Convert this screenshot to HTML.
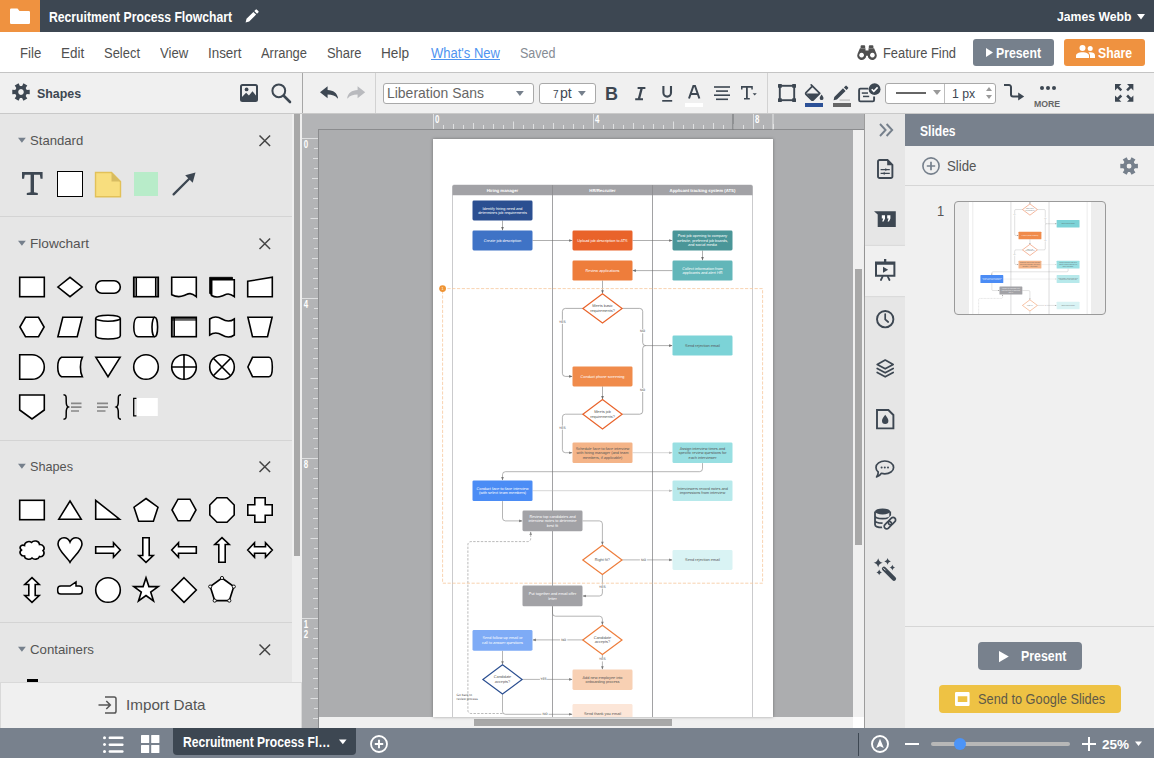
<!DOCTYPE html>
<html><head><meta charset="utf-8"><title>Recruitment Process Flowchart</title>
<style>
*{box-sizing:border-box;margin:0;padding:0}
html,body{width:1154px;height:758px;overflow:hidden;background:#fff}
body{position:relative;font-family:"Liberation Sans",sans-serif;}
.a{position:absolute}
.t{position:absolute;white-space:nowrap;font-family:"Liberation Sans",sans-serif}
svg{position:absolute;overflow:visible}

</style></head>
<body>
<div class="a" style="left:0px;top:0px;width:1154px;height:32px;background:#3d4752;"></div>
<div class="a" style="left:0px;top:0px;width:40px;height:32px;background:#ef9240;"></div>
<div class="a" style="left:0px;top:32px;width:1154px;height:40px;background:#fff;"></div>
<div class="a" style="left:0px;top:72px;width:1154px;height:1px;background:#c4c4c4;"></div>
<div class="a" style="left:0px;top:73px;width:1154px;height:40px;background:#f0f0f0;"></div>
<div class="a" style="left:0px;top:113px;width:1154px;height:1px;background:#c9c9c9;"></div>
<div class="a" style="left:0px;top:114px;width:294px;height:570px;background:#e6e6e6;"></div>
<div class="a" style="left:294px;top:114px;width:6px;height:570px;background:#e6e6e6;"></div>
<div class="a" style="left:300px;top:114px;width:2px;height:613px;background:#efefef;"></div>
<div class="a" style="left:302px;top:114px;width:563px;height:614px;background:#acadaf;"></div>
<div class="a" style="left:865px;top:114px;width:40px;height:614px;background:#e6e6e6;"></div>
<div class="a" style="left:905px;top:114px;width:249px;height:614px;background:#f0f0f0;"></div>
<div class="a" style="left:0px;top:727.5px;width:1154px;height:30.5px;background:#78818d;"></div>
<svg style="left:10px;top:8px" width="20" height="16" viewBox="0 0 20 16"><path d="M1.2 0.5h6.3l2 2.6H18.8a1.2 1.2 0 0 1 1.2 1.2V14.8a1.2 1.2 0 0 1-1.2 1.2H1.2A1.2 1.2 0 0 1 0 14.8V1.7A1.2 1.2 0 0 1 1.2 0.5z" fill="#fff"/></svg>
<span class="t" style="left:49.4px;top:7px;line-height:20px;height:20px;font-size:14px;font-weight:700;color:#fff;transform-origin:0 50%;transform:scaleX(0.8712);">Recruitment Process Flowchart</span>
<svg style="left:245px;top:9px" width="14" height="14" viewBox="0 0 14 14"><path d="M0.6 13.4l0.9-3.6 6.9-6.9 2.7 2.7-6.9 6.9zM9.3 2l1.3-1.3a0.9 0.9 0 0 1 1.3 0l1.4 1.4a0.9 0.9 0 0 1 0 1.3L12 4.7z" fill="#fff"/></svg>
<span class="t" style="left:1057.4px;top:7px;line-height:19px;height:19px;font-size:13.6px;font-weight:700;color:#fff;transform-origin:0 50%;transform:scaleX(0.8991);">James Webb</span>
<svg style="left:1137px;top:14px" width="8" height="6" viewBox="0 0 8 6"><path d="M0 0h8L4 5.6z" fill="#fff"/></svg>
<span class="t" style="left:20.0px;top:43px;line-height:20px;height:20px;font-size:14px;font-weight:400;color:#505050;transform-origin:0 50%;transform:scaleX(0.9396);">File</span>
<span class="t" style="left:61.2px;top:43px;line-height:20px;height:20px;font-size:14px;font-weight:400;color:#505050;transform-origin:0 50%;transform:scaleX(0.9617);">Edit</span>
<span class="t" style="left:104.2px;top:43px;line-height:20px;height:20px;font-size:14px;font-weight:400;color:#505050;transform-origin:0 50%;transform:scaleX(0.9249);">Select</span>
<span class="t" style="left:159.7px;top:43px;line-height:20px;height:20px;font-size:14px;font-weight:400;color:#505050;transform-origin:0 50%;transform:scaleX(0.9371);">View</span>
<span class="t" style="left:207.7px;top:43px;line-height:20px;height:20px;font-size:14px;font-weight:400;color:#505050;transform-origin:0 50%;transform:scaleX(0.9567);">Insert</span>
<span class="t" style="left:261.3px;top:43px;line-height:20px;height:20px;font-size:14px;font-weight:400;color:#505050;transform-origin:0 50%;transform:scaleX(0.9235);">Arrange</span>
<span class="t" style="left:326.9px;top:43px;line-height:20px;height:20px;font-size:14px;font-weight:400;color:#505050;transform-origin:0 50%;transform:scaleX(0.9235);">Share</span>
<span class="t" style="left:380.7px;top:43px;line-height:20px;height:20px;font-size:14px;font-weight:400;color:#505050;transform-origin:0 50%;transform:scaleX(0.9723);">Help</span>
<span class="t" style="left:431.4px;top:43px;line-height:20px;height:20px;font-size:14px;font-weight:400;color:#4f94f0;transform-origin:0 50%;transform:scaleX(0.9293);text-decoration:underline;text-underline-offset:1px">What's New</span>
<span class="t" style="left:519.9px;top:43px;line-height:20px;height:20px;font-size:14px;font-weight:400;color:#868c94;transform-origin:0 50%;transform:scaleX(0.8941);">Saved</span>
<svg style="left:857px;top:45px" width="20" height="14" viewBox="0 0 20 14"><g fill="#505050"><path d="M3.6 1.2a1 1 0 0 1 1-1h2.6a1 1 0 0 1 1 1V3H3.6zM11.8 1.2a1 1 0 0 1 1-1h2.6a1 1 0 0 1 1 1V3h-4.6z"/><path d="M2.9 3.3h5.6v2.2h3V3.3h5.6l2.3 5.4a4.5 4.5 0 1 1-8.6 2h-1.6a4.5 4.5 0 1 1-8.6-2zM4.6 7.7a2.4 2.4 0 1 0 0.01 0zM15.4 7.7a2.4 2.4 0 1 0 0.01 0z" fill-rule="evenodd"/></g></svg>
<span class="t" style="left:883.1px;top:43px;line-height:20px;height:20px;font-size:14px;font-weight:400;color:#505050;transform-origin:0 50%;transform:scaleX(0.9197);">Feature Find</span>
<div class="a" style="left:973px;top:38.5px;width:81px;height:27.5px;background:#76808c;border-radius:3px"></div>
<svg style="left:986px;top:47.5px" width="7" height="9" viewBox="0 0 7 9"><path d="M0 0l7 4.5L0 9z" fill="#fff"/></svg>
<span class="t" style="left:996.1px;top:43px;line-height:20px;height:20px;font-size:14px;font-weight:700;color:#fff;transform-origin:0 50%;transform:scaleX(0.8762);">Present</span>
<div class="a" style="left:1064px;top:38.5px;width:80.5px;height:27.5px;background:#ef9240;border-radius:3px"></div>
<svg style="left:1076px;top:45px" width="19" height="13" viewBox="0 0 19 13"><g fill="#fff"><circle cx="6.5" cy="3" r="3"/><path d="M0 13v-2.2c0-2.2 2.6-3.6 6.5-3.6s6.5 1.4 6.5 3.6V13z"/><circle cx="14.2" cy="3.4" r="2.5"/><path d="M14 13v-2.4c0-1.4-0.6-2.4-1.6-3.2 0.6-0.1 1.2-0.2 1.8-0.2 2.9 0 4.8 1.2 4.8 3.2V13z"/></g></svg>
<span class="t" style="left:1097.8px;top:43px;line-height:20px;height:20px;font-size:14px;font-weight:700;color:#fff;transform-origin:0 50%;transform:scaleX(0.8735);">Share</span>
<svg style="left:12px;top:83.2px" width="18" height="18" viewBox="0 0 18 18"><path fill-rule="evenodd" fill="#3d4752" d="M14.47,6.94 L17.72,6.77 L17.72,11.23 L14.47,11.06 L13.52,12.71 L15.29,15.44 L11.43,17.67 L9.95,14.77 L8.05,14.77 L6.57,17.67 L2.71,15.44 L4.48,12.71 L3.53,11.06 L0.28,11.23 L0.28,6.77 L3.53,6.94 L4.48,5.29 L2.71,2.56 L6.57,0.33 L8.05,3.23 L9.95,3.23 L11.43,0.33 L15.29,2.56 L13.52,5.29z M6.1,9.0 a2.9,2.9 0 1,0 5.8,0 a2.9,2.9 0 1,0 -5.8,0z"/><circle cx="9.0" cy="9.0" r="4.43" fill="none" stroke="#3d4752" stroke-width="3.07"/></svg>
<span class="t" style="left:37.1px;top:84px;line-height:19px;height:19px;font-size:12.8px;font-weight:700;color:#3d4752;transform-origin:0 50%;transform:scaleX(0.9708);">Shapes</span>
<svg style="left:240px;top:84px" width="18" height="18" viewBox="0 0 18 18"><rect x="1" y="1" width="16" height="16" rx="1.5" fill="none" stroke="#3d4752" stroke-width="2"/><circle cx="6.6" cy="5.4" r="1.9" fill="#3d4752"/><path d="M1.5 13.5l4.6-4.8 2.8 2.9 3.6-4.4 4 5V16.5H1.5z" fill="#3d4752"/></svg>
<svg style="left:271px;top:83px" width="21" height="21" viewBox="0 0 21 21"><circle cx="7.8" cy="7.8" r="6.4" fill="none" stroke="#3d4752" stroke-width="2"/><path d="M13 13l6 6" stroke="#3d4752" stroke-width="2.6" stroke-linecap="round"/></svg>
<div class="a" style="left:302px;top:73px;width:1px;height:40px;background:#a6a6a6;"></div>
<svg style="left:320px;top:86.2px" width="18.2" height="12.6" viewBox="0 0 18.2 12.6"><path d="M7.6 0.2L0 6.2l7.6 6V8.4c4.6 0 7.8 1.1 9.8 3.9 0.3 0.4 0.7 0.2 0.6-0.3C17.2 7 13.4 4.2 7.6 4z" fill="#3d4752"/></svg>
<svg style="left:347px;top:86.2px" width="18.2" height="12.6" viewBox="0 0 18.2 12.6"><path d="M7.6 0.2L0 6.2l7.6 6V8.4c4.6 0 7.8 1.1 9.8 3.9 0.3 0.4 0.7 0.2 0.6-0.3C17.2 7 13.4 4.2 7.6 4z" fill="#b9babe" transform="translate(18.2,0) scale(-1,1)"/></svg>
<div class="a" style="left:375px;top:73px;width:1px;height:40px;background:#d2d2d2;"></div>
<div class="a" style="left:383px;top:82.5px;width:151px;height:21.5px;background:#fff;border:1px solid #a9a9a9;border-radius:3px"></div>
<span class="t" style="left:387.0px;top:83px;line-height:20px;height:20px;font-size:14.4px;font-weight:400;color:#666;transform-origin:0 50%;transform:scaleX(0.9698);">Liberation Sans</span>
<svg style="left:516.1px;top:90.5px" width="7.8" height="5" viewBox="0 0 8 5"><path d="M0 0h8L4 5z" fill="#76808c"/></svg>
<div class="a" style="left:539.4px;top:82.5px;width:56.4px;height:21.5px;background:#fff;border:1px solid #a9a9a9;border-radius:3px"></div>
<span class="t" style="left:552.8px;top:87px;line-height:15px;height:15px;font-size:10.4px;font-weight:400;color:#3d4752;transform-origin:0 50%;transform:scaleX(0.9686);">7</span>
<span class="t" style="left:560.0px;top:83px;line-height:20px;height:20px;font-size:14.4px;font-weight:400;color:#3d4752;transform-origin:0 50%;transform:scaleX(0.9821);">pt</span>
<svg style="left:578.3px;top:90.5px" width="7.8" height="5" viewBox="0 0 8 5"><path d="M0 0h8L4 5z" fill="#76808c"/></svg>
<span class="t" style="left:604.8px;top:81px;line-height:25px;height:25px;font-size:18.6px;font-weight:700;color:#3d4752;transform-origin:0 50%;transform:scaleX(0.9674);">B</span>
<svg style="left:634.6px;top:86.5px" width="10.6" height="13.2" viewBox="0 0 10.6 13.2"><path d="M2.6 0H10.4V2H7.7L5.3 11.2H8V13.2H0.200V11.2H2.900L5.300 2H2.600z" fill="#3d4752"/></svg>
<svg style="left:662px;top:86.3px" width="10.4" height="16" viewBox="0 0 10.4 16"><path d="M1.400 0v6.800a3.800 3.800 0 0 0 7.600 0V0" fill="none" stroke="#3d4752" stroke-width="2.100"/><rect x="0.200" y="14" width="10" height="1.700" fill="#3d4752"/></svg>
<svg style="left:688px;top:85.2px" width="12.4" height="13.6" viewBox="0 0 12.4 13.6"><path d="M1 13.500L5.400 0.900h1.600l4.400 12.600M2.800 9h6.800" fill="none" stroke="#3d4752" stroke-width="2"/></svg>
<div class="a" style="left:685px;top:103.3px;width:18px;height:3.6px;background:#fff;"></div>
<svg style="left:714px;top:85.6px" width="16" height="15" viewBox="0 0 16 15"><g fill="#3d4752"><rect x="0" y="0.2" width="16" height="1.6"/><rect x="2" y="4.3" width="12" height="1.6"/><rect x="0" y="8.4" width="16" height="1.6"/><rect x="2" y="12.5" width="12" height="1.6"/></g></svg>
<svg style="left:741px;top:86.3px" width="16" height="13.6" viewBox="0 0 16 13.6"><path d="M0 0h11.8v3.4h-1.5V1.7H6.8v10.2h2v1.7H3v-1.7h2V1.7H1.5v1.7H0z" fill="#3d4752"/><path d="M11.6 7.2h4.2L13.7 9.6z" fill="#3d4752"/></svg>
<div class="a" style="left:767px;top:73px;width:1px;height:40px;background:#d2d2d2;"></div>
<svg style="left:778px;top:84px" width="18" height="18" viewBox="0 0 18 18"><rect x="1.8" y="1.8" width="14.4" height="14.4" fill="none" stroke="#3d4752" stroke-width="1.9"/><g fill="#3d4752"><rect x="0" y="0" width="3.8" height="3.8" rx="0.5"/><rect x="14.2" y="0" width="3.8" height="3.8" rx="0.5"/><rect x="0" y="14.2" width="3.8" height="3.8" rx="0.5"/><rect x="14.2" y="14.2" width="3.8" height="3.8" rx="0.5"/></g></svg>
<svg style="left:805px;top:83.6px" width="19" height="18" viewBox="0 0 19 18"><path d="M6.2 0.8l8.6 8.6-6.5 6.5a1.2 1.2 0 0 1-1.7 0L1 10.3a1.2 1.2 0 0 1 0-1.7L6.9 2.7" fill="none" stroke="#3d4752" stroke-width="1.7" stroke-linejoin="round" stroke-linecap="round"/><path d="M1.4 9.4h13L8.2 15.8a1 1 0 0 1-1.4 0z" fill="#3d4752"/><path d="M16.6 10.6c1 1.5 1.9 2.6 1.9 3.6a1.9 1.9 0 0 1-3.8 0c0-1 0.9-2.100 1.900-3.600z" fill="#3d4752"/></svg>
<div class="a" style="left:805px;top:103.3px;width:18px;height:3.6px;background:#2c5197;"></div>
<svg style="left:833px;top:84.6px" width="18" height="16" viewBox="0 0 18 16"><path d="M0.600 15.200l0.700-3.200 8.700-8.700 2.600 2.600-8.700 8.700zM10.900 2.400l1.500-1.500a0.900 0.900 0 0 1 1.300 0l1.300 1.300a0.900 0.900 0 0 1 0 1.300L13.500 5z" fill="#3d4752"/><rect x="6.500" y="14.600" width="10.500" height="0.900" fill="#aaa"/></svg>
<div class="a" style="left:833px;top:103.3px;width:18px;height:3.6px;background:#666;"></div>
<svg style="left:858px;top:83px" width="23" height="20" viewBox="0 0 23 20"><path d="M10.400 5.600H2.400a1.300 1.300 0 0 0-1.300 1.300v10.200a1.300 1.300 0 0 0 1.300 1.300h12.400a1.300 1.300 0 0 0 1.300-1.300v-3.600" fill="none" stroke="#3d4752" stroke-width="1.9"/><rect x="3.800" y="9.300" width="6.200" height="1.500" fill="#3d4752"/><rect x="5" y="12.700" width="6.200" height="1.500" fill="#3d4752"/><circle cx="16.600" cy="6.200" r="5.900" fill="#3d4752"/><path d="M13.700 6.200l2.100 2.100 3.800-3.900" fill="none" stroke="#fff" stroke-width="1.600"/></svg>
<div class="a" style="left:885.2px;top:82.5px;width:111.2px;height:21.5px;background:#fff;border:1px solid #a9a9a9;border-radius:3px"></div>
<div class="a" style="left:944.4px;top:83.5px;width:1px;height:19.5px;background:#bdbdbd;"></div>
<div class="a" style="left:896px;top:92.4px;width:30.4px;height:1.4px;background:#666;"></div>
<svg style="left:932.7px;top:90.2px" width="8" height="5.2" viewBox="0 0 8 5"><path d="M0 0h8L4 5z" fill="#9a9a9a"/></svg>
<span class="t" style="left:951.8px;top:84px;line-height:19px;height:19px;font-size:12.8px;font-weight:400;color:#3d4752;transform-origin:0 50%;transform:scaleX(0.9586);">1 px</span>
<svg style="left:985.6px;top:87px" width="6" height="12" viewBox="0 0 6 12"><path d="M0 4h6L3 0zM0 8h6L3 12z" fill="#9a9a9a"/></svg>
<svg style="left:1004px;top:84.200px" width="21" height="17" viewBox="0 0 21 17"><path d="M0 1.100h5a2 2 0 0 1 2 2v7.400a2 2 0 0 0 2 2h6" fill="none" stroke="#3d4752" stroke-width="2"/><path d="M14.200 8.600l6 3.900-6 3.900z" fill="#3d4752"/></svg>
<svg style="left:1040px;top:85.9px" width="17" height="5" viewBox="0 0 17 5"><g fill="#3d4752"><circle cx="2" cy="2" r="2"/><circle cx="8" cy="2" r="2"/><circle cx="14" cy="2" r="2"/></g></svg>
<span class="t" style="left:1034.2px;top:96px;line-height:15px;height:15px;font-size:9.6px;font-weight:700;color:#666;transform-origin:0 50%;transform:scaleX(0.9103);">MORE</span>
<svg style="left:1114.6px;top:84.1px" width="18.4" height="17.8" viewBox="0 0 18.4 17.8"><path d="M0 0h6.4L0 6.4z" fill="#3d4752"/><path d="M1.6 1.6L6.3 6.3" stroke="#3d4752" stroke-width="2.500"/><path d="M18.4 0h-6.4L18.4 6.4z" fill="#3d4752"/><path d="M16.799999999999997 1.6L12.099999999999998 6.3" stroke="#3d4752" stroke-width="2.500"/><path d="M0 17.8h6.4L0 11.4z" fill="#3d4752"/><path d="M1.6 16.2L6.3 11.5" stroke="#3d4752" stroke-width="2.500"/><path d="M18.4 17.8h-6.4L18.4 11.4z" fill="#3d4752"/><path d="M16.799999999999997 16.2L12.099999999999998 11.5" stroke="#3d4752" stroke-width="2.500"/></svg>
<svg style="left:18.4px;top:137.0px" width="7.8" height="6.6" viewBox="0 0 8 5"><path d="M0 0h8L4 5z" fill="#76808c"/></svg>
<span class="t" style="left:30.0px;top:131px;line-height:19px;height:19px;font-size:13.2px;font-weight:400;color:#545454;transform-origin:0 50%;transform:scaleX(0.9938);">Standard</span>
<svg style="left:259.4px;top:134.5px" width="11.6" height="11.6" viewBox="0 0 11.6 11.6"><path d="M0.5 0.5l10.6 10.6M11.1 0.5L0.5 11.1" stroke="#444" stroke-width="1.5" fill="none"/></svg>
<svg style="left:18.4px;top:240.0px" width="7.8" height="6.6" viewBox="0 0 8 5"><path d="M0 0h8L4 5z" fill="#76808c"/></svg>
<span class="t" style="left:30.0px;top:234px;line-height:19px;height:19px;font-size:13.2px;font-weight:400;color:#545454;transform-origin:0 50%;transform:scaleX(1.0320);">Flowchart</span>
<svg style="left:259.4px;top:237.5px" width="11.6" height="11.6" viewBox="0 0 11.6 11.6"><path d="M0.5 0.5l10.6 10.6M11.1 0.5L0.5 11.1" stroke="#444" stroke-width="1.5" fill="none"/></svg>
<svg style="left:18.4px;top:463.0px" width="7.8" height="6.6" viewBox="0 0 8 5"><path d="M0 0h8L4 5z" fill="#76808c"/></svg>
<span class="t" style="left:30.0px;top:457px;line-height:19px;height:19px;font-size:13.2px;font-weight:400;color:#545454;transform-origin:0 50%;transform:scaleX(0.9612);">Shapes</span>
<svg style="left:259.4px;top:460.5px" width="11.6" height="11.6" viewBox="0 0 11.6 11.6"><path d="M0.5 0.5l10.6 10.6M11.1 0.5L0.5 11.1" stroke="#444" stroke-width="1.5" fill="none"/></svg>
<svg style="left:18.4px;top:646.0px" width="7.8" height="6.6" viewBox="0 0 8 5"><path d="M0 0h8L4 5z" fill="#76808c"/></svg>
<span class="t" style="left:30.0px;top:640px;line-height:19px;height:19px;font-size:13.2px;font-weight:400;color:#545454;transform-origin:0 50%;transform:scaleX(1.0034);">Containers</span>
<svg style="left:259.4px;top:643.5px" width="11.6" height="11.6" viewBox="0 0 11.6 11.6"><path d="M0.5 0.5l10.6 10.6M11.1 0.5L0.5 11.1" stroke="#444" stroke-width="1.5" fill="none"/></svg>
<div class="a" style="left:0px;top:216px;width:292px;height:1px;background:#d4d4d4;"></div>
<div class="a" style="left:0px;top:440px;width:292px;height:1px;background:#d4d4d4;"></div>
<div class="a" style="left:0px;top:622px;width:292px;height:1px;background:#d4d4d4;"></div>
<div class="a" style="left:292px;top:114px;width:10px;height:614px;background:#efefef;"></div>
<div class="a" style="left:294px;top:114px;width:6px;height:442px;background:#a8a8a8;"></div>
<svg style="left:22.1px;top:172.3px" width="20.6" height="23.1" viewBox="0 0 20.6 23.1"><path d="M0 0H20.600V6.800H18.500L17.900 2.700H12V20.300L15.800 20.900V23.100H4.800V20.900L8.600 20.300V2.700H2.700L2.100 6.800H0z" fill="#3d4752"/></svg>
<div class="a" style="left:57.3px;top:171.3px;width:26px;height:25.4px;background:#fff;border:1.8px solid #000"></div>
<svg style="left:95.3px;top:171.5px" width="26" height="25.2" viewBox="0 0 26 25.2"><path d="M0.5 0.5H16.5L25.5 9.5V24.7H0.5z" fill="#f8de7e" stroke="#e2c159" stroke-width="1.400"/><path d="M16.5 0.5L25.5 9.5H16.5z" fill="#d7bc62"/></svg>
<div class="a" style="left:134px;top:172.3px;width:24.2px;height:23.6px;background:#b8ecc9;"></div>
<svg style="left:172px;top:172px" width="24" height="24" viewBox="0 0 24 24"><path d="M1.6 22.400L17.500 6.500" stroke="#3d4752" stroke-width="2.300" stroke-linecap="round"/><path d="M23.500 0.500l-2.800 10.300-7.500-7.500z" fill="#3d4752"/></svg>
<svg style="left:19.3px;top:272.8px" width="26" height="28" viewBox="0 0 26 28" fill="#fff" stroke="#000" stroke-width="1.6" stroke-linejoin="miter"><rect x="0.7" y="4.3" width="24.6" height="19.4"/></svg>
<svg style="left:57.3px;top:272.8px" width="26" height="28" viewBox="0 0 26 28" fill="#fff" stroke="#000" stroke-width="1.6" stroke-linejoin="miter"><path d="M0.9 14L13 4.3 25.100 14 13 23.7z"/></svg>
<svg style="left:95.3px;top:272.8px" width="26" height="28" viewBox="0 0 26 28" fill="#fff" stroke="#000" stroke-width="1.6" stroke-linejoin="miter"><rect x="0.7" y="7.8" width="24.6" height="12.4" rx="6.200"/></svg>
<svg style="left:133.3px;top:272.8px" width="26" height="28" viewBox="0 0 26 28" fill="#fff" stroke="#000" stroke-width="1.6" stroke-linejoin="miter"><rect x="0.7" y="4.3" width="24.6" height="19.4"/><path d="M3.500 4.3V23.7M22.500 4.3V23.7" stroke-width="1.1"/><path d="M2 4.3V23.7M24 4.3V23.7" stroke-width="1.1"/></svg>
<svg style="left:171.3px;top:272.8px" width="26" height="28" viewBox="0 0 26 28" fill="#fff" stroke="#000" stroke-width="1.6" stroke-linejoin="miter"><path d="M0.7 4.3H25.300V23.7C19 18.500 17 21 13 22.600 9 24.200 5 24 0.7 21.800z"/></svg>
<svg style="left:209.3px;top:272.8px" width="26" height="28" viewBox="0 0 26 28" fill="#fff" stroke="#000" stroke-width="1.6" stroke-linejoin="miter"><path d="M2.500 6.800H25.300V23.7C19 19 17 21.500 13 23 9 24.500 5.500 24.200 2.500 22.500z"/><path d="M0.600 4.3H23.500V6.500H2.800V22L0.600 20.500z" fill="#000" stroke-width="0.800"/></svg>
<svg style="left:247.3px;top:272.8px" width="26" height="28" viewBox="0 0 26 28" fill="#fff" stroke="#000" stroke-width="1.6" stroke-linejoin="miter"><path d="M0.7 8.300L25.300 4.3V23.7H0.7z"/></svg>
<svg style="left:19.3px;top:312.9px" width="26" height="28" viewBox="0 0 26 28" fill="#fff" stroke="#000" stroke-width="1.6" stroke-linejoin="miter"><path d="M0.900 14L6.500 4.3H19.500L25.100 14 19.500 23.7H6.500z"/></svg>
<svg style="left:57.3px;top:312.9px" width="26" height="28" viewBox="0 0 26 28" fill="#fff" stroke="#000" stroke-width="1.6" stroke-linejoin="miter"><path d="M5.800 4.3H25.100L20.200 23.7H0.900z"/></svg>
<svg style="left:95.3px;top:312.9px" width="26" height="28" viewBox="0 0 26 28" fill="#fff" stroke="#000" stroke-width="1.6" stroke-linejoin="miter"><path d="M0.700 5.200V22.800C0.700 24.800 6 26 13 26S25.300 24.800 25.300 22.800V5.200"/><ellipse cx="13" cy="5.200" rx="12.300" ry="3"/></svg>
<svg style="left:133.3px;top:312.9px" width="26" height="28" viewBox="0 0 26 28" fill="#fff" stroke="#000" stroke-width="1.6" stroke-linejoin="miter"><path d="M5 4.3H21.800V23.7H5C-0.600 23.7 -0.600 4.3 5 4.3z" stroke="none"/><path d="M21.800 4.3H5C-0.600 4.3 -0.600 23.7 5 23.7H21.800" fill="none"/><ellipse cx="21.800" cy="14" rx="2.800" ry="9.700"/></svg>
<svg style="left:171.3px;top:312.9px" width="26" height="28" viewBox="0 0 26 28" fill="#fff" stroke="#000" stroke-width="1.6" stroke-linejoin="miter"><rect x="0.7" y="4.3" width="24.6" height="19.4"/><path d="M0.700 7H25.300M3.400 4.3V23.7" stroke-width="1.100"/><path d="M0.700 5.700H25.300M2 4.3V23.7" stroke-width="1.100"/></svg>
<svg style="left:209.3px;top:312.9px" width="26" height="28" viewBox="0 0 26 28" fill="#fff" stroke="#000" stroke-width="1.6" stroke-linejoin="miter"><path d="M0.700 6C5 3 9 3.500 13 6S21 9 25.300 6V22C21 25 17 24.500 13 22S5 19 0.700 22z"/></svg>
<svg style="left:247.3px;top:312.9px" width="26" height="28" viewBox="0 0 26 28" fill="#fff" stroke="#000" stroke-width="1.6" stroke-linejoin="miter"><path d="M0.900 4.3H25.100L20.500 23.7H5.500z"/></svg>
<svg style="left:19.3px;top:352.8px" width="26" height="28" viewBox="0 0 26 28" fill="#fff" stroke="#000" stroke-width="1.6" stroke-linejoin="miter"><path d="M0.700 1.700H13A12.300 12.300 0 0 1 13 26.300H0.700z"/></svg>
<svg style="left:57.3px;top:352.8px" width="26" height="28" viewBox="0 0 26 28" fill="#fff" stroke="#000" stroke-width="1.6" stroke-linejoin="miter"><path d="M4.500 4.3H25.300C22.800 9 22.800 19 25.300 23.7H4.500C-0.500 21.2 -0.500 6.8 4.500 4.3z"/></svg>
<svg style="left:95.3px;top:352.8px" width="26" height="28" viewBox="0 0 26 28" fill="#fff" stroke="#000" stroke-width="1.6" stroke-linejoin="miter"><path d="M0.900 4.3H25.100L13 23.7z"/></svg>
<svg style="left:133.3px;top:352.8px" width="26" height="28" viewBox="0 0 26 28" fill="#fff" stroke="#000" stroke-width="1.6" stroke-linejoin="miter"><circle cx="13" cy="14" r="12.300"/></svg>
<svg style="left:171.3px;top:352.8px" width="26" height="28" viewBox="0 0 26 28" fill="#fff" stroke="#000" stroke-width="1.6" stroke-linejoin="miter"><circle cx="13" cy="14" r="12.300"/><path d="M13 1.700V26.300M0.700 14H25.300"/></svg>
<svg style="left:209.3px;top:352.8px" width="26" height="28" viewBox="0 0 26 28" fill="#fff" stroke="#000" stroke-width="1.6" stroke-linejoin="miter"><circle cx="13" cy="14" r="12.300"/><path d="M4.300 5.300L21.700 22.700M21.700 5.300L4.300 22.700"/></svg>
<svg style="left:247.3px;top:352.8px" width="26" height="28" viewBox="0 0 26 28" fill="#fff" stroke="#000" stroke-width="1.6" stroke-linejoin="miter"><path d="M5.500 4.3H22C24.500 4.3 25.300 9 25.300 14S24.500 23.7 22 23.7H5.500L0.900 14z"/></svg>
<svg style="left:19.3px;top:392.9px" width="26" height="28" viewBox="0 0 26 28" fill="#fff" stroke="#000" stroke-width="1.6" stroke-linejoin="miter"><path d="M0.700 2H25.300V17L13 26 0.700 17z"/></svg>
<svg style="left:57.3px;top:392.9px" width="26" height="28" viewBox="0 0 26 28" fill="#fff" stroke="#000" stroke-width="1.6" stroke-linejoin="miter"><path d="M6.500 1.800C9.500 1.800 9.200 4 9.200 7.500S9 13 11.200 14C9 15 9.200 17 9.200 20.500S9.500 26.200 6.500 26.200" stroke-width="1.500" fill="none"/><path d="M14 10.400H24.500M14 14.200H24.500M14 18H22" stroke="#888" stroke-width="1.700"/></svg>
<svg style="left:95.3px;top:392.9px" width="26" height="28" viewBox="0 0 26 28" fill="#fff" stroke="#000" stroke-width="1.6" stroke-linejoin="miter"><path d="M26 1.800C23 1.800 23.300 4 23.300 7.500S23.500 13 21.300 14C23.500 15 23.300 17 23.300 20.500S23 26.200 26 26.200" stroke-width="1.500" fill="none"/><path d="M2 10.400H13M2 14.200H13M2 18H10.500" stroke="#888" stroke-width="1.700"/></svg>
<svg style="left:133.3px;top:392.9px" width="26" height="28" viewBox="0 0 26 28" fill="#fff" stroke="#000" stroke-width="1.6" stroke-linejoin="miter"><rect x="4" y="5" width="20.800" height="18" fill="#fff" stroke="none"/><path d="M3.400 5.400H0.700V22.900H3.400" stroke-width="1.300" fill="none"/></svg>
<svg style="left:19.3px;top:495.9px" width="26" height="28" viewBox="0 0 26 28" fill="#fff" stroke="#000" stroke-width="1.6" stroke-linejoin="miter"><rect x="0.7" y="4.3" width="24.6" height="19.4"/></svg>
<svg style="left:57.3px;top:495.9px" width="26" height="28" viewBox="0 0 26 28" fill="#fff" stroke="#000" stroke-width="1.6" stroke-linejoin="miter"><path d="M13 5L24.200 23.2H1.800z"/></svg>
<svg style="left:95.3px;top:495.9px" width="26" height="28" viewBox="0 0 26 28" fill="#fff" stroke="#000" stroke-width="1.6" stroke-linejoin="miter"><path d="M0.700 4.3V23.2H24.500z"/></svg>
<svg style="left:133.3px;top:495.9px" width="26" height="28" viewBox="0 0 26 28" fill="#fff" stroke="#000" stroke-width="1.6" stroke-linejoin="miter"><path d="M13 2.500L25 11.200 20.400 25.300H5.600L1 11.200z"/></svg>
<svg style="left:171.3px;top:495.9px" width="26" height="28" viewBox="0 0 26 28" fill="#fff" stroke="#000" stroke-width="1.6" stroke-linejoin="miter"><path d="M1 14L7 3.200H19L25 14 19 24.800H7z"/></svg>
<svg style="left:209.3px;top:495.9px" width="26" height="28" viewBox="0 0 26 28" fill="#fff" stroke="#000" stroke-width="1.6" stroke-linejoin="miter"><path d="M8 1.800H18L25.200 9V19L18 26.200H8L0.800 19V9z"/></svg>
<svg style="left:247.3px;top:495.9px" width="26" height="28" viewBox="0 0 26 28" fill="#fff" stroke="#000" stroke-width="1.6" stroke-linejoin="miter"><path d="M7.800 1.800H18.200V8.800H25.200V19.200H18.200V26.200H7.800V19.200H0.800V8.800H7.800z"/></svg>
<svg style="left:19.3px;top:535.9px" width="26" height="28" viewBox="0 0 26 28" fill="#fff" stroke="#000" stroke-width="1.6" stroke-linejoin="miter"><path d="M5.500 9.500C5.500 6 10 4.500 12.500 6.500 14.500 4 20 4.500 20.500 8.500 24.500 8 26.500 12.500 24 14.500 26.500 17.500 24 21.500 20.500 20.500 19.500 23.500 15 24 13 22 10.500 24.500 5.500 23 5.500 20 1.500 20.500 -0.500 16 2.500 14 -0.500 11.500 2 8 5.500 9.500z"/></svg>
<svg style="left:57.3px;top:535.9px" width="26" height="28" viewBox="0 0 26 28" fill="#fff" stroke="#000" stroke-width="1.6" stroke-linejoin="miter"><path d="M13 26.300C10 21 1 14.500 1 8 1 4 4 1.700 7 1.700 9.800 1.700 12 3.500 13 6 14 3.500 16.200 1.700 19 1.700 22 1.700 25 4 25 8 25 14.500 16 21 13 26.300z"/></svg>
<svg style="left:95.3px;top:535.9px" width="26" height="28" viewBox="0 0 26 28" fill="#fff" stroke="#000" stroke-width="1.6" stroke-linejoin="miter"><path d="M0.700 10.800H18.500V6.800L25.300 14 18.500 21.200V17.200H0.700z"/></svg>
<svg style="left:133.3px;top:535.9px" width="26" height="28" viewBox="0 0 26 28" fill="#fff" stroke="#000" stroke-width="1.6" stroke-linejoin="miter"><path d="M9.800 1.700H16.200V19.500H20.200L13 26.300 5.800 19.500H9.800z"/></svg>
<svg style="left:171.3px;top:535.9px" width="26" height="28" viewBox="0 0 26 28" fill="#fff" stroke="#000" stroke-width="1.6" stroke-linejoin="miter"><path d="M25.300 10.800H7.500V6.800L0.700 14 7.500 21.200V17.200H25.300z"/></svg>
<svg style="left:209.3px;top:535.9px" width="26" height="28" viewBox="0 0 26 28" fill="#fff" stroke="#000" stroke-width="1.6" stroke-linejoin="miter"><path d="M9.800 26.300H16.200V8.500H20.200L13 1.700 5.800 8.500H9.800z"/></svg>
<svg style="left:247.3px;top:535.9px" width="26" height="28" viewBox="0 0 26 28" fill="#fff" stroke="#000" stroke-width="1.6" stroke-linejoin="miter"><path d="M0.700 14L7.500 6.800V10.800H18.500V6.800L25.300 14 18.500 21.200V17.200H7.500V21.200z"/></svg>
<svg style="left:19.3px;top:576.0px" width="26" height="28" viewBox="0 0 26 28" fill="#fff" stroke="#000" stroke-width="1.6" stroke-linejoin="miter"><path d="M13 1.700L20.200 8.500H16.200V19.500H20.200L13 26.300 5.800 19.500H9.800V8.500H5.800z"/></svg>
<svg style="left:57.3px;top:576.0px" width="26" height="28" viewBox="0 0 26 28" fill="#fff" stroke="#000" stroke-width="1.6" stroke-linejoin="miter"><path d="M3.800 10H13L19 6V10H22.200A3.100 3.100 0 0 1 25.300 13.100V14.900A3.100 3.100 0 0 1 22.200 18H3.800A3.100 3.100 0 0 1 0.700 14.900V13.100A3.100 3.100 0 0 1 3.800 10z" stroke-width="1.500"/></svg>
<svg style="left:95.3px;top:576.0px" width="26" height="28" viewBox="0 0 26 28" fill="#fff" stroke="#000" stroke-width="1.6" stroke-linejoin="miter"><circle cx="13" cy="14" r="12.300"/></svg>
<svg style="left:133.3px;top:576.0px" width="26" height="28" viewBox="0 0 26 28" fill="#fff" stroke="#000" stroke-width="1.6" stroke-linejoin="miter"><path d="M13 1.800L15.900 10.600H25.200L17.700 16.100 20.500 25 13 19.500 5.500 25 8.300 16.100 0.800 10.600H10.100z"/></svg>
<svg style="left:171.3px;top:576.0px" width="26" height="28" viewBox="0 0 26 28" fill="#fff" stroke="#000" stroke-width="1.6" stroke-linejoin="miter"><path d="M13 1.700L25.300 14 13 26.300 0.700 14z"/></svg>
<svg style="left:209.3px;top:576.0px" width="26" height="28" viewBox="0 0 26 28" fill="#fff" stroke="#000" stroke-width="1.6" stroke-linejoin="miter"><path d="M13 2L24.800 10.600 20.300 24.600H5.700L1.200 10.600z"/><g fill="#fff" stroke-width="0.900"><circle cx="13" cy="2" r="1.600"/><circle cx="24.800" cy="10.600" r="1.600"/><circle cx="20.300" cy="24.600" r="1.600"/><circle cx="5.700" cy="24.600" r="1.600"/><circle cx="1.200" cy="10.600" r="1.600"/></g></svg>
<div class="a" style="left:26.9px;top:679px;width:10.8px;height:3px;background:#000;"></div>
<div class="a" style="left:0px;top:682px;width:302px;height:46px;background:#f0f0f0;border:1px solid #d9d9d9;border-bottom:none"></div>
<svg style="left:98px;top:696px" width="19" height="18" viewBox="0 0 19 18"><path d="M7 1h9.200a1.800 1.800 0 0 1 1.800 1.800v12.400a1.800 1.800 0 0 1-1.800 1.800H7" fill="none" stroke="#555" stroke-width="1.500"/><path d="M0.500 9H12M8.300 5l4 4-4 4" fill="none" stroke="#555" stroke-width="1.500"/></svg>
<span class="t" style="left:126.2px;top:695px;line-height:20px;height:20px;font-size:14.6px;font-weight:400;color:#555;transform-origin:0 50%;transform:scaleX(1.0439);">Import Data</span>
<div class="a" style="left:302px;top:114px;width:563px;height:16px;background:#b3b4b6;"></div>
<div class="a" style="left:302px;top:114px;width:16px;height:614px;background:#b3b4b6;"></div>
<div class="a" style="left:318px;top:129px;width:547px;height:1px;background:#8b8c8e;"></div>
<div class="a" style="left:318px;top:129px;width:1px;height:599px;background:#8b8c8e;"></div>
<svg style="left:0;top:0" width="1154" height="758" viewBox="0 0 1154 758" fill="#dedfe0"><rect x="433" y="114" width="1" height="15"/><rect x="443" y="125" width="1" height="4"/><rect x="453" y="124" width="1" height="5"/><rect x="463" y="125" width="1" height="4"/><rect x="473" y="123" width="1" height="6"/><rect x="483" y="125" width="1" height="4"/><rect x="493" y="124" width="1" height="5"/><rect x="503" y="125" width="1" height="4"/><rect x="513" y="121.5" width="1" height="7.5"/><rect x="523" y="125" width="1" height="4"/><rect x="533" y="124" width="1" height="5"/><rect x="543" y="125" width="1" height="4"/><rect x="553" y="123" width="1" height="6"/><rect x="563" y="125" width="1" height="4"/><rect x="573" y="124" width="1" height="5"/><rect x="583" y="125" width="1" height="4"/><rect x="593" y="114" width="1" height="15"/><rect x="603" y="125" width="1" height="4"/><rect x="613" y="124" width="1" height="5"/><rect x="623" y="125" width="1" height="4"/><rect x="633" y="123" width="1" height="6"/><rect x="643" y="125" width="1" height="4"/><rect x="653" y="124" width="1" height="5"/><rect x="663" y="125" width="1" height="4"/><rect x="673" y="121.5" width="1" height="7.5"/><rect x="683" y="125" width="1" height="4"/><rect x="693" y="124" width="1" height="5"/><rect x="703" y="125" width="1" height="4"/><rect x="713" y="123" width="1" height="6"/><rect x="723" y="125" width="1" height="4"/><rect x="733" y="124" width="1" height="5"/><rect x="743" y="125" width="1" height="4"/><rect x="753" y="114" width="1" height="15"/><rect x="763" y="125" width="1" height="4"/><rect x="773" y="124" width="1" height="5"/><rect x="302" y="138" width="16" height="1"/><rect x="314" y="148" width="4" height="1"/><rect x="313" y="158" width="5" height="1"/><rect x="314" y="168" width="4" height="1"/><rect x="312" y="178" width="6" height="1"/><rect x="314" y="188" width="4" height="1"/><rect x="313" y="198" width="5" height="1"/><rect x="314" y="208" width="4" height="1"/><rect x="310.5" y="218" width="7.5" height="1"/><rect x="314" y="228" width="4" height="1"/><rect x="313" y="238" width="5" height="1"/><rect x="314" y="248" width="4" height="1"/><rect x="312" y="258" width="6" height="1"/><rect x="314" y="268" width="4" height="1"/><rect x="313" y="278" width="5" height="1"/><rect x="314" y="288" width="4" height="1"/><rect x="302" y="298" width="16" height="1"/><rect x="314" y="308" width="4" height="1"/><rect x="313" y="318" width="5" height="1"/><rect x="314" y="328" width="4" height="1"/><rect x="312" y="338" width="6" height="1"/><rect x="314" y="348" width="4" height="1"/><rect x="313" y="358" width="5" height="1"/><rect x="314" y="368" width="4" height="1"/><rect x="310.5" y="378" width="7.5" height="1"/><rect x="314" y="388" width="4" height="1"/><rect x="313" y="398" width="5" height="1"/><rect x="314" y="408" width="4" height="1"/><rect x="312" y="418" width="6" height="1"/><rect x="314" y="428" width="4" height="1"/><rect x="313" y="438" width="5" height="1"/><rect x="314" y="448" width="4" height="1"/><rect x="302" y="458" width="16" height="1"/><rect x="314" y="468" width="4" height="1"/><rect x="313" y="478" width="5" height="1"/><rect x="314" y="488" width="4" height="1"/><rect x="312" y="498" width="6" height="1"/><rect x="314" y="508" width="4" height="1"/><rect x="313" y="518" width="5" height="1"/><rect x="314" y="528" width="4" height="1"/><rect x="310.5" y="538" width="7.5" height="1"/><rect x="314" y="548" width="4" height="1"/><rect x="313" y="558" width="5" height="1"/><rect x="314" y="568" width="4" height="1"/><rect x="312" y="578" width="6" height="1"/><rect x="314" y="588" width="4" height="1"/><rect x="313" y="598" width="5" height="1"/><rect x="314" y="608" width="4" height="1"/><rect x="302" y="618" width="16" height="1"/><rect x="314" y="628" width="4" height="1"/><rect x="313" y="638" width="5" height="1"/><rect x="314" y="648" width="4" height="1"/><rect x="312" y="658" width="6" height="1"/><rect x="314" y="668" width="4" height="1"/><rect x="313" y="678" width="5" height="1"/><rect x="314" y="688" width="4" height="1"/><rect x="310.5" y="698" width="7.5" height="1"/><rect x="314" y="708" width="4" height="1"/><rect x="313" y="718" width="5" height="1"/><rect x="732.500" y="114" width="1" height="15.500" fill="#6d6e70"/><rect x="772.500" y="114" width="1" height="15.500" fill="#e8e8e8"/><g font-family="Liberation Sans, sans-serif" font-size="10.400" font-weight="700" fill="#fff"><text transform="translate(435,123) scale(0.760,1)">0</text><text transform="translate(595,123) scale(0.760,1)">4</text><text transform="translate(755,123) scale(0.760,1)">8</text><text transform="translate(303.8,148.2) scale(0.760,1)">0</text><text transform="translate(303.8,308.2) scale(0.760,1)">4</text><text transform="translate(303.8,468.2) scale(0.760,1)">8</text><text transform="translate(303.8,628.3) scale(0.760,1)">1</text><text transform="translate(303.8,637.9) scale(0.760,1)">2</text></g></svg>
<div class="a" style="left:853px;top:130px;width:11.5px;height:587px;background:#f0f0f0;"></div>
<div class="a" style="left:855px;top:269px;width:7px;height:276px;background:#a8a8a8;"></div>
<div class="a" style="left:319px;top:717px;width:534px;height:11px;background:#f0f0f0;"></div>
<div class="a" style="left:474px;top:719px;width:198px;height:6.5px;background:#a8a8a8;"></div>
<div class="a" style="left:853px;top:717px;width:11px;height:11px;background:#fff;"></div>
<div class="a" style="left:433px;top:139px;width:340px;height:578px;background:#fff;overflow:hidden;box-shadow:0 0 3px rgba(0,0,0,0.35)">
<svg style="left:-433px;top:-139px" width="1154" height="758" viewBox="0 0 1154 758"><g id="dg" font-family="Liberation Sans, sans-serif" font-size="3.850" text-rendering="geometricPrecision"><path d="M452.500 717V186.600a1.500 1.500 0 0 1 1.500-1.500H751a1.500 1.500 0 0 1 1.500 1.500V717" fill="none" stroke="#b5b5b8" stroke-width="0.700"/><path d="M452.500 195.300V186.600a1.500 1.500 0 0 1 1.500-1.500H751a1.500 1.500 0 0 1 1.500 1.500V195.300z" fill="#a2a2a6"/><text x="502.5" y="191.700" fill="#fff" text-anchor="middle" font-size="4.300" font-weight="700">Hiring manager</text><text x="602.5" y="191.700" fill="#fff" text-anchor="middle" font-size="4.300" font-weight="700">HR/Recruiter</text><text x="702.5" y="191.700" fill="#fff" text-anchor="middle" font-size="4.300" font-weight="700">Applicant tracking system (ATS)</text><path d="M552.500 185.100V717M652.500 185.100V717" stroke="#8a8a8d" stroke-width="0.800" fill="none"/><path d="M502.500 220.500V230.300" fill="none" stroke="#6c6c6c" stroke-width="0.55"/><path d="M502.5 230.5L501.2 227.1H503.8z" fill="#6c6c6c"/><path d="M532.500 240.500H572.300" fill="none" stroke="#6c6c6c" stroke-width="0.55"/><path d="M572.5 240.5L569.1 239.2V241.8z" fill="#6c6c6c"/><path d="M632.500 240.500H672.300" fill="none" stroke="#6c6c6c" stroke-width="0.55"/><path d="M672.5 240.5L669.1 239.2V241.8z" fill="#6c6c6c"/><path d="M702.500 250.500V260.300" fill="none" stroke="#6c6c6c" stroke-width="0.55"/><path d="M702.5 260.5L701.2 257.1H703.8z" fill="#6c6c6c"/><path d="M672.500 270.600H632.700" fill="none" stroke="#6c6c6c" stroke-width="0.55"/><path d="M632.5 270.6L635.9 269.3V271.90000000000003z" fill="#6c6c6c"/><path d="M602.500 280.500V293.400" fill="none" stroke="#6c6c6c" stroke-width="0.55"/><path d="M602.5 293.6L601.2 290.20000000000005H603.8z" fill="#6c6c6c"/><path d="M583 308.400H565.400a3 3 0 0 0-3 3V373.400a3 3 0 0 0 3 3H572" fill="none" stroke="#6c6c6c" stroke-width="0.55"/><path d="M572.5 376.4L569.1 375.09999999999997V377.7z" fill="#6c6c6c"/><path d="M622.200 308.400H639.700a3 3 0 0 1 3 3V342.600a3 3 0 0 0 3 3H672" fill="none" stroke="#6c6c6c" stroke-width="0.55"/><path d="M672.5 345.6L669.1 344.3V346.90000000000003z" fill="#6c6c6c"/><path d="M602.500 386.300V399" fill="none" stroke="#6c6c6c" stroke-width="0.55"/><path d="M602.5 399.4L601.2 396.0H603.8z" fill="#6c6c6c"/><path d="M622.200 414.200H639.700a3 3 0 0 0 3-3V348.600a3 3 0 0 1 3-3" fill="none" stroke="#6c6c6c" stroke-width="0.55"/><path d="M583 414.200H565.400a3 3 0 0 0-3 3V449.700a3 3 0 0 0 3 3H572" fill="none" stroke="#787878" stroke-width="0.55"/><path d="M572.5 452.7L569.1 451.4V454.0z" fill="#787878"/><path d="M632.500 452.700H672" fill="none" stroke="#b4b4b4" stroke-width="0.55"/><path d="M672.5 452.7L669.1 451.4V454.0z" fill="#b4b4b4"/><path d="M702.500 463.100V468.700a3 3 0 0 1-3 3H505.500a3 3 0 0 0-3 3V480" fill="none" stroke="#787878" stroke-width="0.55"/><path d="M502.5 480.4L501.2 477.0H503.8z" fill="#787878"/><path d="M532.500 490.700H672" fill="none" stroke="#b4b4b4" stroke-width="0.55"/><path d="M672.5 490.7L669.1 489.4V492.0z" fill="#b4b4b4"/><path d="M502.500 501.100V517.900a3 3 0 0 0 3 3H522" fill="none" stroke="#787878" stroke-width="0.55"/><path d="M522.5 520.9L519.1 519.6V522.1999999999999z" fill="#787878"/><path d="M582.500 520.900H599.400a3 3 0 0 1 3 3V544.600" fill="none" stroke="#787878" stroke-width="0.55"/><path d="M602.4 545.1L601.1 541.7H603.6999999999999z" fill="#787878"/><path d="M622.200 559.900H672" fill="none" stroke="#787878" stroke-width="0.55"/><path d="M672.5 559.9L669.1 558.6V561.1999999999999z" fill="#787878"/><path d="M602.400 574.700V593a3 3 0 0 1-3 3H583" fill="none" stroke="#787878" stroke-width="0.55"/><path d="M582.5 596L585.9 594.7V597.3z" fill="#787878"/><path d="M552.500 606.300V613.200a3 3 0 0 0 3 3H599.400a3 3 0 0 1 3 3V624.600" fill="none" stroke="#787878" stroke-width="0.55"/><path d="M602.4 625.1L601.1 621.7H603.6999999999999z" fill="#787878"/><path d="M583 639.900H533" fill="none" stroke="#787878" stroke-width="0.55"/><path d="M532.5 639.9L535.9 638.6V641.1999999999999z" fill="#787878"/><path d="M602.400 654.700V669.200" fill="none" stroke="#787878" stroke-width="0.55"/><path d="M602.4 669.6L601.1 666.2H603.6999999999999z" fill="#787878"/><path d="M502.500 650.800V664.200" fill="none" stroke="#787878" stroke-width="0.55"/><path d="M502.5 664.6L501.2 661.2H503.8z" fill="#787878"/><path d="M522.200 679.400H572" fill="none" stroke="#787878" stroke-width="0.55"/><path d="M572.5 679.4L569.1 678.1V680.6999999999999z" fill="#787878"/><path d="M502.500 694.200V711.300a3 3 0 0 0 3 3H572" fill="none" stroke="#787878" stroke-width="0.55"/><path d="M572.5 714.3L569.1 713.0V715.5999999999999z" fill="#787878"/><path d="M502.500 713.500H470.900a3 3 0 0 1-3-3V544.600a3 3 0 0 1 3-3H527.700a3 3 0 0 0 3-3V532" fill="none" stroke="#8c8c8c" stroke-width="0.6" stroke-dasharray="2.400 1.400"/><path d="M530.7 531.5L529.4000000000001 534.9H532.0z" fill="#8c8c8c"/><rect x="558.8" y="319.8" width="7.200" height="4" fill="#fff"/><text x="562.4" y="322.8" fill="#3a3a3a" text-anchor="middle" font-size="3.300">YES</text><rect x="639.0" y="329.3" width="7.200" height="4" fill="#fff"/><text x="642.6" y="332.3" fill="#3a3a3a" text-anchor="middle" font-size="3.300">NO</text><rect x="639.0" y="388" width="7.200" height="4" fill="#fff"/><text x="642.6" y="391" fill="#3a3a3a" text-anchor="middle" font-size="3.300">NO</text><rect x="558.8" y="425.6" width="7.200" height="4" fill="#fff"/><text x="562.4" y="428.6" fill="#3a3a3a" text-anchor="middle" font-size="3.300">YES</text><rect x="639.9" y="557.9" width="7.200" height="4" fill="#fff"/><text x="643.5" y="560.9" fill="#3a3a3a" text-anchor="middle" font-size="3.300">NO</text><rect x="598.8" y="584.6" width="7.200" height="4" fill="#fff"/><text x="602.4" y="587.6" fill="#3a3a3a" text-anchor="middle" font-size="3.300">YES</text><rect x="560.1" y="637.9" width="7.200" height="4" fill="#fff"/><text x="563.7" y="640.9" fill="#3a3a3a" text-anchor="middle" font-size="3.300">NO</text><rect x="598.8" y="657.4" width="7.200" height="4" fill="#fff"/><text x="602.4" y="660.4" fill="#3a3a3a" text-anchor="middle" font-size="3.300">YES</text><rect x="539.9" y="677.4" width="7.200" height="4" fill="#fff"/><text x="543.5" y="680.4" fill="#3a3a3a" text-anchor="middle" font-size="3.300">YES</text><rect x="541.4" y="712.3" width="7.200" height="4" fill="#fff"/><text x="545" y="715.3" fill="#3a3a3a" text-anchor="middle" font-size="3.300">NO</text><text x="456.600" y="696.400" fill="#555" font-size="3.200">Go back to</text><text x="456.600" y="700.200" fill="#555" font-size="3.200">review process</text><rect x="472.5" y="200.5" width="60" height="20" rx="1.400" fill="#2b4f91" /><text x="502.5" y="209.53" fill="#fff" text-anchor="middle">Identify hiring need and</text><text x="502.5" y="214.08" fill="#fff" text-anchor="middle">determines job requirements</text><rect x="472.5" y="230.5" width="60" height="20" rx="1.400" fill="#3f73c6" /><text x="502.5" y="241.80" fill="#fff" text-anchor="middle">Create job description</text><rect x="572.5" y="230.5" width="60" height="20" rx="1.400" fill="#e9632a" /><text x="602.5" y="241.80" fill="#fff" text-anchor="middle">Upload job description to ATS</text><rect x="672.5" y="230.5" width="60" height="20" rx="1.400" fill="#4a9698" /><text x="702.5" y="237.25" fill="#fff" text-anchor="middle">Post job opening to company</text><text x="702.5" y="241.80" fill="#fff" text-anchor="middle">website, preferred job boards,</text><text x="702.5" y="246.35" fill="#fff" text-anchor="middle">and social media</text><rect x="572.5" y="260.6" width="60" height="20" rx="1.400" fill="#ee7d3b" /><text x="602.5" y="271.90" fill="#fff" text-anchor="middle">Review applications</text><rect x="672.5" y="260.6" width="60" height="20" rx="1.400" fill="#62b6b9" /><text x="702.5" y="269.63" fill="#fff" text-anchor="middle">Collect information from</text><text x="702.5" y="274.18" fill="#fff" text-anchor="middle">applicants and alert HR</text><path d="M582.9 308.4L602.5 293.7 622.1 308.4 602.5 323.09999999999997z" fill="#fff" stroke="#e9632a" stroke-width="1.200"/><text x="602.5" y="307.43" fill="#555" text-anchor="middle">Meets basic</text><text x="602.5" y="311.98" fill="#555" text-anchor="middle">requirements?</text><rect x="672.5" y="335.6" width="60" height="20" rx="1.400" fill="#7cd3d7" /><text x="702.5" y="346.90" fill="#555" text-anchor="middle">Send rejection email</text><rect x="572.5" y="366.4" width="60" height="20" rx="1.400" fill="#f08b4b" /><text x="602.5" y="377.70" fill="#fff" text-anchor="middle">Conduct phone screening</text><path d="M582.9 414.2L602.5 399.5 622.1 414.2 602.5 428.9z" fill="#fff" stroke="#e9632a" stroke-width="1.200"/><text x="602.5" y="413.23" fill="#555" text-anchor="middle">Meets job</text><text x="602.5" y="417.78" fill="#555" text-anchor="middle">requirements?</text><rect x="572.5" y="442.4" width="60" height="20.7" rx="1.400" fill="#f4b488" /><text x="602.5" y="449.50" fill="#555" text-anchor="middle">Schedule face-to-face interview</text><text x="602.5" y="454.05" fill="#555" text-anchor="middle">with hiring manager (and team</text><text x="602.5" y="458.60" fill="#555" text-anchor="middle">members, if applicable)</text><rect x="672.5" y="442.4" width="60" height="20.7" rx="1.400" fill="#98dfe2" /><text x="702.5" y="449.50" fill="#555" text-anchor="middle">Assign interview times and</text><text x="702.5" y="454.05" fill="#555" text-anchor="middle">specific review questions for</text><text x="702.5" y="458.60" fill="#555" text-anchor="middle">each interviewer</text><rect x="472.5" y="480.4" width="60" height="20.7" rx="1.400" fill="#4b8cf5" /><text x="502.5" y="489.78" fill="#fff" text-anchor="middle">Conduct face-to-face interview</text><text x="502.5" y="494.33" fill="#fff" text-anchor="middle">(with select team members)</text><rect x="672.5" y="480.4" width="60" height="20.7" rx="1.400" fill="#b7e9eb" /><text x="702.5" y="489.78" fill="#555" text-anchor="middle">Interviewers record notes and</text><text x="702.5" y="494.33" fill="#555" text-anchor="middle">impressions from interview</text><rect x="522.5" y="510.5" width="60" height="20.7" rx="1.400" fill="#a2a2a6" /><text x="552.5" y="517.60" fill="#fff" text-anchor="middle">Review top candidates and</text><text x="552.5" y="522.15" fill="#fff" text-anchor="middle">interview notes to determine</text><text x="552.5" y="526.70" fill="#fff" text-anchor="middle">best fit</text><path d="M582.8 559.9L602.4 545.1999999999999 622.0 559.9 602.4 574.6z" fill="#fff" stroke="#ee7d3b" stroke-width="1.200"/><text x="602.4" y="561.20" fill="#555" text-anchor="middle">Right fit?</text><rect x="672.5" y="550" width="60" height="20" rx="1.400" fill="#d9f3f4" /><text x="702.5" y="561.30" fill="#555" text-anchor="middle">Send rejection email</text><rect x="522.5" y="585.6" width="60" height="20.7" rx="1.400" fill="#a2a2a6" /><text x="552.5" y="594.98" fill="#fff" text-anchor="middle">Put together and email offer</text><text x="552.5" y="599.52" fill="#fff" text-anchor="middle">letter</text><path d="M582.8 639.9L602.4 625.1999999999999 622.0 639.9 602.4 654.6z" fill="#fff" stroke="#ee7d3b" stroke-width="1.200"/><text x="602.4" y="638.92" fill="#555" text-anchor="middle">Candidate</text><text x="602.4" y="643.47" fill="#555" text-anchor="middle">accepts?</text><rect x="472.5" y="630" width="60" height="20.7" rx="1.400" fill="#7eabf6" /><text x="502.5" y="639.38" fill="#fff" text-anchor="middle">Send follow-up email or</text><text x="502.5" y="643.92" fill="#fff" text-anchor="middle">call to answer questions</text><path d="M482.9 679.4L502.5 664.6999999999999 522.1 679.4 502.5 694.1z" fill="#fff" stroke="#2b4f91" stroke-width="1.200"/><text x="502.5" y="678.42" fill="#555" text-anchor="middle">Candidate</text><text x="502.5" y="682.97" fill="#555" text-anchor="middle">accepts?</text><rect x="572.5" y="669.6" width="60" height="20.3" rx="1.400" fill="#f8d0b3" /><text x="602.5" y="678.77" fill="#555" text-anchor="middle">Add new employee into</text><text x="602.5" y="683.32" fill="#555" text-anchor="middle">onboarding process</text><rect x="572.5" y="704" width="60" height="20" rx="1.400" fill="#fce6d8" /><text x="602.5" y="715.30" fill="#555" text-anchor="middle">Send thank you email</text></g><rect x="442.600" y="288.600" width="320" height="294.600" fill="none" stroke="#f6c79c" stroke-width="0.800" stroke-dasharray="3.200 1.600"/><circle cx="442.600" cy="288.600" r="3.400" fill="#ef9435"/><text x="442.600" y="289.900" fill="#fff" text-anchor="middle" font-size="3.600" font-family="Liberation Sans, sans-serif">1</text></svg>
</div>
<div class="a" style="left:864px;top:114px;width:1px;height:614px;background:#9c9c9c;"></div>
<div class="a" style="left:865px;top:245.5px;width:41px;height:50.5px;background:#f0f0f0;box-shadow:0 0 2px rgba(0,0,0,0.15)"></div>
<div class="a" style="left:905px;top:245px;width:5px;height:52px;background:#f0f0f0;"></div>
<svg style="left:878.700px;top:123px" width="14.400" height="14" viewBox="0 0 14.400 14"><path d="M1 1l5.600 6-5.600 6M7.600 1l5.600 6-5.600 6" fill="none" stroke="#76808c" stroke-width="1.900"/></svg>
<svg style="left:876.800px;top:159px" width="16.400" height="20" viewBox="0 0 16.400 20"><path d="M2.600 1H10.500L15.400 5.900V17.400a1.600 1.600 0 0 1-1.600 1.600H2.600A1.600 1.600 0 0 1 1 17.400V2.600A1.600 1.600 0 0 1 2.600 1z" fill="none" stroke="#3d4752" stroke-width="1.900"/><path d="M10.200 0.800L15.600 6.200H10.200z" fill="#3d4752"/><path d="M3.600 10.600H12.800M3.600 14.400H12.800" stroke="#3d4752" stroke-width="1.100"/><path d="M8.400 9L10.400 10.600 8.400 12.200zM7.600 12.800L5.600 14.400 7.600 16z" fill="#3d4752"/></svg>
<svg style="left:874.200px;top:210.800px" width="22" height="16.200" viewBox="0 0 22 16.200"><path d="M0 0.200H21.800V16H3.700V3.400z" fill="#3d4752"/><path d="M7.800 4.200H11V7.400L9.600 10.400H8.200L9.200 7.400H7.800zM13.200 4.200H16.400V7.400L15 10.400H13.600L14.600 7.400H13.200z" fill="#fff"/></svg>
<svg style="left:874.800px;top:258.600px" width="20.400" height="21.800" viewBox="0 0 20.400 21.800"><rect x="9" y="0" width="2.300" height="3" fill="#3d4752"/><path d="M0 2.500H20.400V17.800H0zM2 5.800V15.800H18.400V5.800z" fill="#3d4752" fill-rule="evenodd"/><path d="M8 7.800L13.200 10.800 8 13.800z" fill="#3d4752"/><path d="M7.600 17.600L5.900 21M12.800 17.600L14.500 21" stroke="#3d4752" stroke-width="1.800" stroke-linecap="round"/></svg>
<svg style="left:875.800px;top:309.800px" width="18.400" height="18.400" viewBox="0 0 18.400 18.400"><circle cx="9.200" cy="9.200" r="8.200" fill="none" stroke="#3d4752" stroke-width="1.900"/><path d="M9.200 4V9.400L12.200 12" fill="none" stroke="#3d4752" stroke-width="1.700" stroke-linecap="round"/></svg>
<svg style="left:875.800px;top:358.800px" width="18.400" height="19" viewBox="0 0 18.400 19"><path d="M9.200 1L17.200 5.400 9.200 9.800 1.200 5.400z" fill="none" stroke="#3d4752" stroke-width="1.700" stroke-linejoin="round"/><path d="M1.200 9.400L9.200 13.800 17.200 9.400M1.200 13.400L9.200 17.800 17.200 13.400" fill="none" stroke="#3d4752" stroke-width="1.700" stroke-linejoin="round" stroke-linecap="round"/></svg>
<svg style="left:875.800px;top:408.800px" width="18.400" height="20.400" viewBox="0 0 18.400 20.400"><path d="M1 1H12.400L17.400 6V19.400H1z" fill="none" stroke="#3d4752" stroke-width="1.900" stroke-linejoin="miter"/><path d="M9.200 5.800C10.600 8 12.400 9.800 12.400 11.800A3.200 3.200 0 0 1 6 11.800C6 9.800 7.800 8 9.200 5.800z" fill="#3d4752"/></svg>
<svg style="left:875.200px;top:459.600px" width="19.600" height="18.400" viewBox="0 0 19.600 18.400"><path d="M9.800 1C14.600 1 18.600 3.800 18.600 7.400S14.600 13.800 9.800 13.800C8.600 13.800 7.400 13.600 6.400 13.300 5.200 15.200 3.400 16.600 1.600 17 2.800 15.400 3.400 13.800 3.200 12 1.800 10.800 1 9.200 1 7.400 1 3.800 5 1 9.800 1z" fill="none" stroke="#3d4752" stroke-width="1.700" stroke-linejoin="round"/><g fill="#3d4752"><circle cx="6.600" cy="7.400" r="1"/><circle cx="9.800" cy="7.400" r="1"/><circle cx="13" cy="7.400" r="1"/></g></svg>
<svg style="left:873.800px;top:508px" width="22.600" height="22.200" viewBox="0 0 22.600 22.200"><ellipse cx="8.600" cy="3.400" rx="7.600" ry="3" fill="#3d4752"/><path d="M1 3.400V16.400C1 18.200 4.200 19.400 8.600 19.400M16.200 3.400V10M1 7.800C1 9.500 4.200 10.700 8.600 10.700S16.200 9.500 16.200 7.800M1 12.200C1 13.900 4.200 15.100 8.600 15.100" fill="none" stroke="#3d4752" stroke-width="1.800"/><g fill="none" stroke="#e6e6e6" stroke-width="4.600"><rect x="-4.200" y="-2.500" width="8.400" height="5" rx="2.500" transform="translate(17.900,13.100) rotate(-45)"/><rect x="-4.200" y="-2.500" width="8.400" height="5" rx="2.500" transform="translate(13.900,17.100) rotate(-45)"/></g><g fill="none" stroke="#3d4752" stroke-width="1.700"><rect x="-4.200" y="-2.500" width="8.400" height="5" rx="2.500" transform="translate(17.900,13.100) rotate(-45)"/><rect x="-4.200" y="-2.500" width="8.400" height="5" rx="2.500" transform="translate(13.900,17.100) rotate(-45)"/></g></svg>
<svg style="left:873.800px;top:558px" width="22.600" height="22.800" viewBox="0 0 22.600 22.800"><path d="M10 10.800L20 20.800" stroke="#3d4752" stroke-width="4.200" stroke-linecap="round"/><path d="M9.400 10.200L11.600 12.400" stroke="#e6e6e6" stroke-width="1" /><g fill="#3d4752"><path d="M0 -1C0.200 -0.360 0.360 -0.200 1 0 0.360 0.200 0.200 0.360 0 1 -0.200 0.360 -0.360 0.200 -1 0 -0.360 -0.200 -0.200 -0.360 0 -1z" transform="translate(4.200,4.800) scale(4.600)"/><path d="M0 -1C0.200 -0.360 0.360 -0.200 1 0 0.360 0.200 0.200 0.360 0 1 -0.200 0.360 -0.360 0.200 -1 0 -0.360 -0.200 -0.200 -0.360 0 -1z" transform="translate(13.600,3.400) scale(3.300)"/><path d="M0 -1C0.200 -0.360 0.360 -0.200 1 0 0.360 0.200 0.200 0.360 0 1 -0.200 0.360 -0.360 0.200 -1 0 -0.360 -0.200 -0.200 -0.360 0 -1z" transform="translate(18.400,9.600) scale(2.800)"/><path d="M0 -1C0.200 -0.360 0.360 -0.200 1 0 0.360 0.200 0.200 0.360 0 1 -0.200 0.360 -0.360 0.200 -1 0 -0.360 -0.200 -0.200 -0.360 0 -1z" transform="translate(5.200,14.400) scale(2.800)"/></g></svg>
<div class="a" style="left:905px;top:114px;width:249px;height:32px;background:#78818d;"></div>
<span class="t" style="left:919.6px;top:121px;line-height:20px;height:20px;font-size:14px;font-weight:700;color:#fff;transform-origin:0 50%;transform:scaleX(0.8630);">Slides</span>
<svg style="left:922px;top:157px" width="18" height="18" viewBox="0 0 18 18"><circle cx="9" cy="9" r="8.100" fill="none" stroke="#76808c" stroke-width="1.600"/><path d="M9 4.800V13.200M4.800 9H13.200" stroke="#76808c" stroke-width="1.700"/></svg>
<span class="t" style="left:946.9px;top:157px;line-height:19px;height:19px;font-size:13.8px;font-weight:400;color:#555;transform-origin:0 50%;transform:scaleX(0.9613);">Slide</span>
<svg style="left:1119.6px;top:156.8px" width="18.2" height="18.2" viewBox="0 0 18.2 18.2"><path fill-rule="evenodd" fill="#76808c" d="M14.64,7.02 L17.92,6.85 L17.92,11.35 L14.64,11.18 L13.67,12.85 L15.46,15.61 L11.56,17.86 L10.06,14.94 L8.14,14.94 L6.64,17.86 L2.74,15.61 L4.53,12.85 L3.56,11.18 L0.28,11.35 L0.28,6.85 L3.56,7.02 L4.53,5.35 L2.74,2.59 L6.64,0.34 L8.14,3.26 L10.06,3.26 L11.56,0.34 L15.46,2.59 L13.67,5.35z M6.5,9.1 a2.6,2.6 0 1,0 5.2,0 a2.6,2.6 0 1,0 -5.2,0z"/><circle cx="9.1" cy="9.1" r="4.32" fill="none" stroke="#76808c" stroke-width="3.43"/></svg>
<div class="a" style="left:905px;top:185px;width:249px;height:1px;background:#d6d6d6;"></div>
<span class="t" style="left:936.6px;top:202px;line-height:19px;height:19px;font-size:13.8px;font-weight:400;color:#555;transform-origin:0 50%;transform:scaleX(0.9366);">1</span>
<div class="a" style="left:954px;top:201px;width:152px;height:114px;background:#ededed;border:1px solid #9a9a9a;border-radius:4px;overflow:hidden"><div class="a" style="left:14px;top:0;width:122px;height:112px;background:#fff"></div><svg style="left:14px;top:0" width="122" height="112.300" viewBox="442.600 288.600 320 294.600"><use href="#dg"/></svg></div>
<div class="a" style="left:905px;top:626px;width:249px;height:1px;background:#d6d6d6;"></div>
<div class="a" style="left:978px;top:642px;width:104px;height:27.6px;background:#78818d;border-radius:4px"></div>
<svg style="left:999px;top:650.600px" width="9.800" height="11.200" viewBox="0 0 9.800 11.200"><path d="M0 0L9.800 5.600 0 11.200z" fill="#fff"/></svg>
<span class="t" style="left:1021.3px;top:647px;line-height:19px;height:19px;font-size:13.8px;font-weight:700;color:#fff;transform-origin:0 50%;transform:scaleX(0.8948);">Present</span>
<div class="a" style="left:939px;top:685px;width:181.8px;height:27.8px;background:#eec244;border-radius:4px"></div>
<svg style="left:954.600px;top:691.600px" width="14.600" height="14" viewBox="0 0 14.600 14"><path d="M1.200 0H13.400A1.200 1.200 0 0 1 14.600 1.200V12.800A1.200 1.200 0 0 1 13.400 14H1.200A1.200 1.200 0 0 1 0 12.800V1.200A1.200 1.200 0 0 1 1.200 0zM2.800 4.300V10.100H12.300V4.300z" fill="#fff" fill-rule="evenodd"/></svg>
<span class="t" style="left:978.4px;top:689px;line-height:20px;height:20px;font-size:14px;font-weight:400;color:#5f5a48;transform-origin:0 50%;transform:scaleX(0.9130);">Send to Google Slides</span>
<div class="a" style="left:0px;top:727.5px;width:1154px;height:30.5px;background:#78818d;"></div>
<svg style="left:103px;top:735.600px" width="20.600" height="17.200" viewBox="0 0 20.600 17.200" fill="#fff"><circle cx="1.500" cy="1.800" r="1.500"/><circle cx="1.500" cy="8.600" r="1.500"/><circle cx="1.500" cy="15.400" r="1.500"/><rect x="5.600" y="0.600" width="15" height="2.500" rx="1.200"/><rect x="5.600" y="7.400" width="15" height="2.500" rx="1.200"/><rect x="5.600" y="14.200" width="15" height="2.500" rx="1.200"/></svg>
<svg style="left:141px;top:735.200px" width="18.400" height="18" viewBox="0 0 18.400 18" fill="#fff"><rect x="0" y="0" width="8.200" height="8" rx="0.600"/><rect x="10.200" y="0" width="8.200" height="8" rx="0.600"/><rect x="0" y="10" width="8.200" height="8" rx="0.600"/><rect x="10.200" y="10" width="8.200" height="8" rx="0.600"/></svg>
<div class="a" style="left:173.3px;top:727.5px;width:182.6px;height:27.5px;background:#3d4752;border-radius:0 0 4px 4px"></div>
<span class="t" style="left:182.9px;top:732px;line-height:20px;height:20px;font-size:14px;font-weight:700;color:#fff;transform-origin:0 50%;transform:scaleX(0.8651);">Recruitment Process Fl&hellip;</span>
<svg style="left:338.5px;top:739px" width="7.6" height="5.6" viewBox="0 0 8 5"><path d="M0 0h8L4 5z" fill="#fff"/></svg>
<svg style="left:370.200px;top:734.800px" width="18" height="18" viewBox="0 0 18 18"><circle cx="9" cy="9" r="8" fill="none" stroke="#fff" stroke-width="1.800"/><path d="M9 4.800V13.200M4.800 9H13.200" stroke="#fff" stroke-width="1.900"/></svg>
<div class="a" style="left:858px;top:733px;width:1px;height:22.5px;background:#3d4752;"></div>
<svg style="left:871px;top:734.800px" width="18" height="18" viewBox="0 0 18 18"><circle cx="9" cy="9" r="8" fill="none" stroke="#fff" stroke-width="1.900"/><path d="M9 3.800L12.800 13 9 11.200 5.200 13z" fill="#fff"/></svg>
<div class="a" style="left:905px;top:742.7px;width:14px;height:2.4px;background:#fff;"></div>
<div class="a" style="left:931px;top:742px;width:139px;height:4.2px;background:#b7b7b7;border-radius:2.100px"></div>
<div class="a" style="left:954px;top:738px;width:12.200px;height:12.200px;border-radius:50%;background:#4d94f7"></div>
<div class="a" style="left:1082px;top:743px;width:14px;height:2.2px;background:#fff;"></div>
<div class="a" style="left:1087.9px;top:737px;width:2.2px;height:14.2px;background:#fff;"></div>
<span class="t" style="left:1102.2px;top:735px;line-height:19px;height:19px;font-size:13.4px;font-weight:700;color:#fff;transform-origin:0 50%;transform:scaleX(1.0107);">25%</span>
<svg style="left:1135.4px;top:741.2px" width="7" height="5.4" viewBox="0 0 8 5"><path d="M0 0h8L4 5z" fill="#fff"/></svg>
</body></html>
